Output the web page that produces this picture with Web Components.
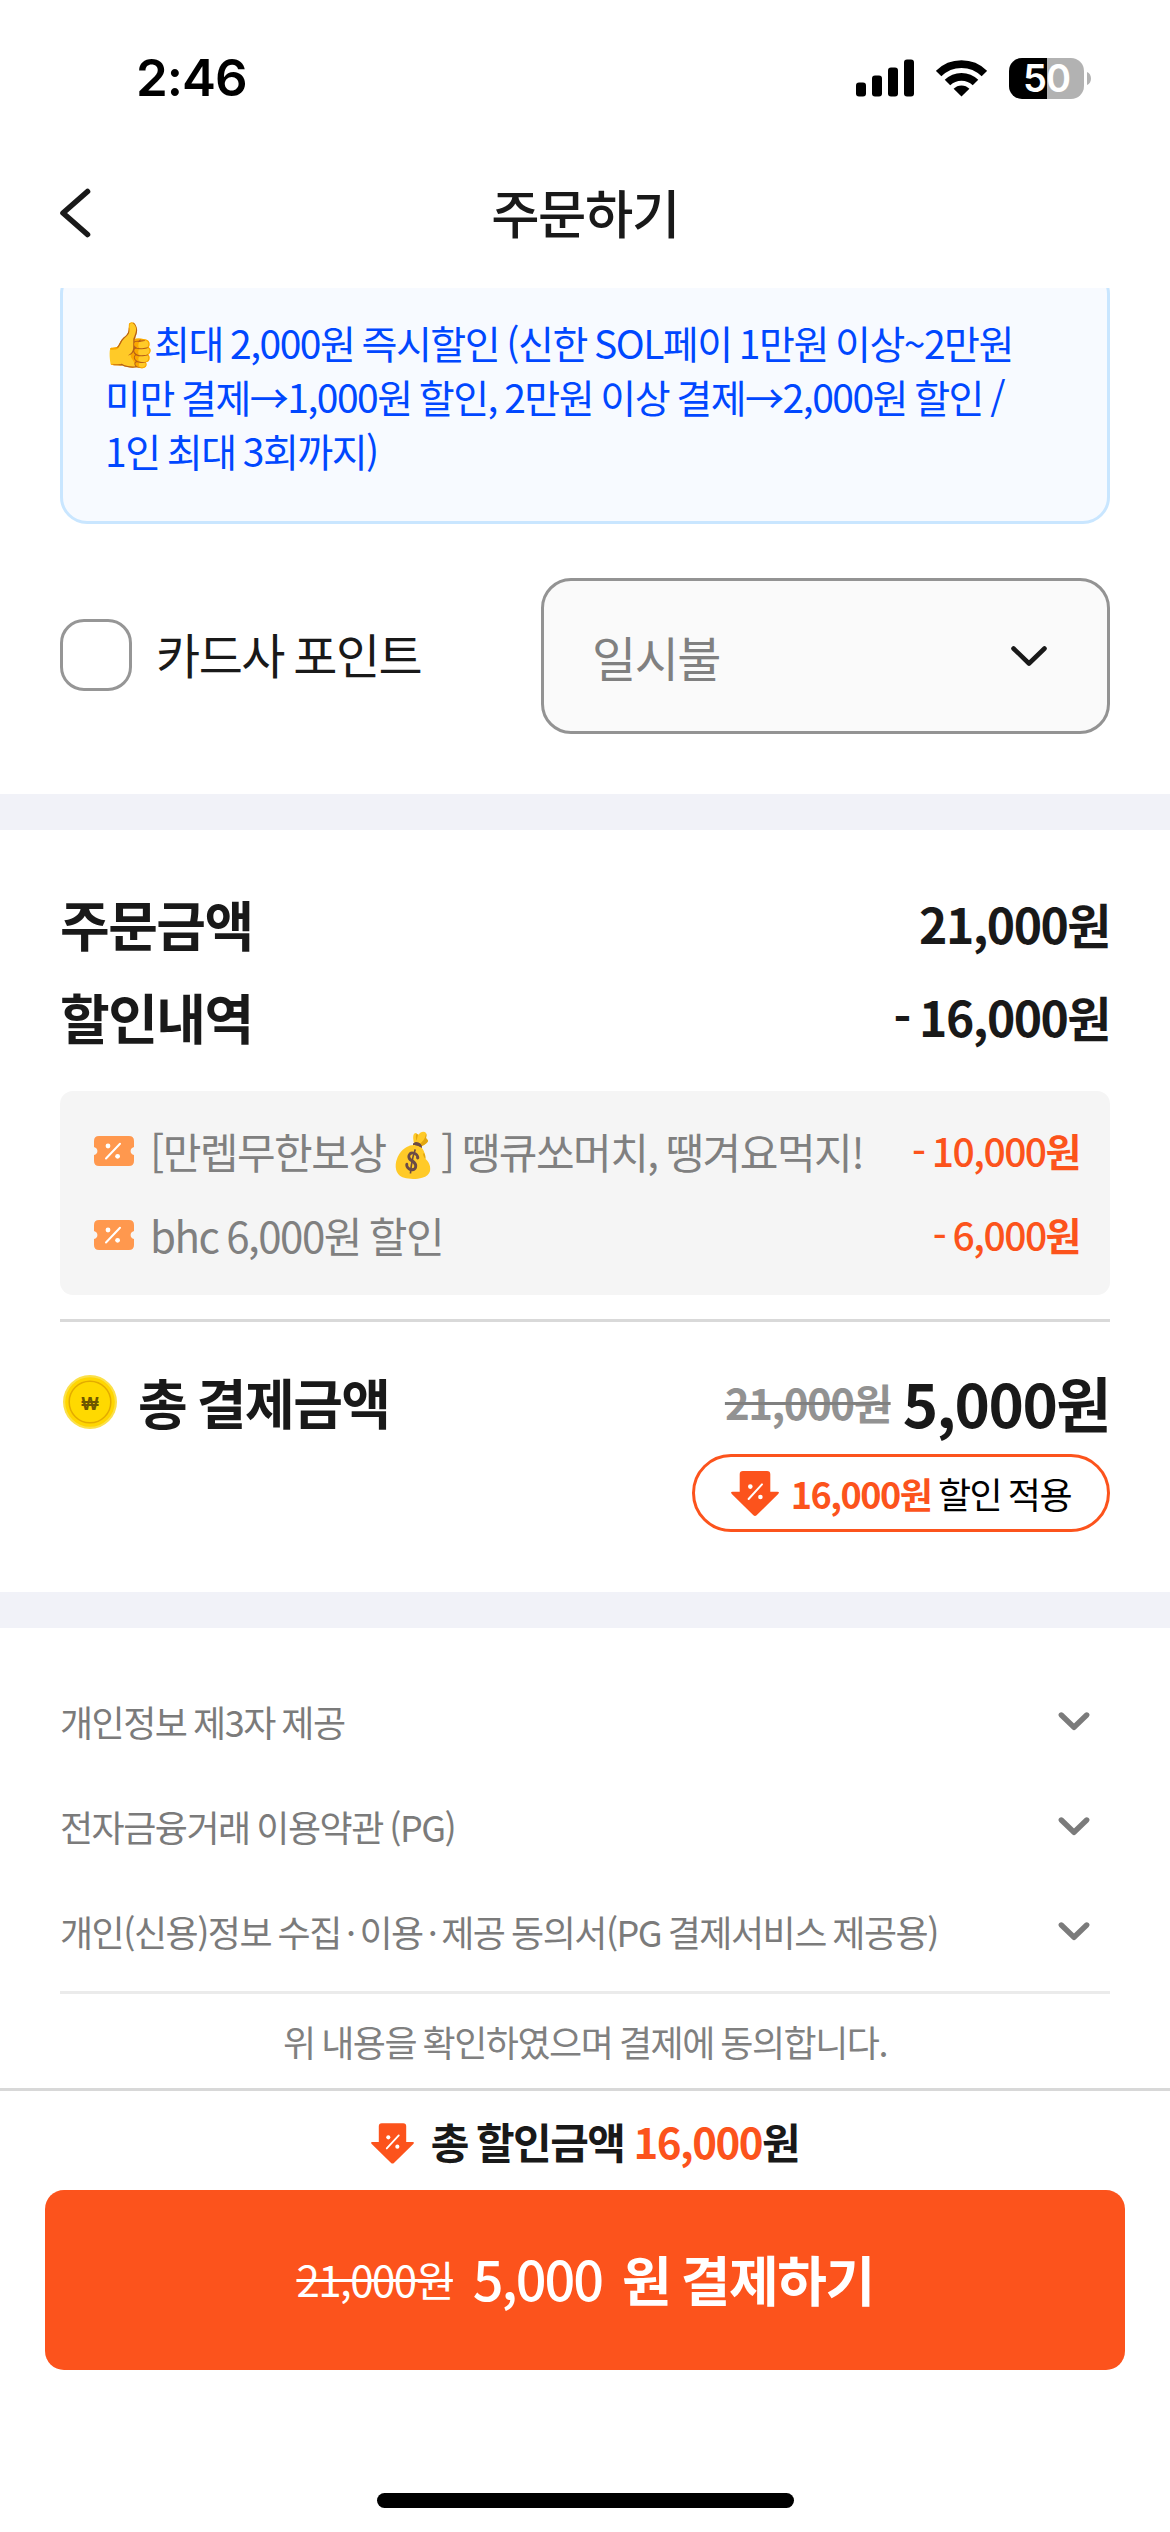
<!DOCTYPE html>
<html lang="ko">
<head>
<meta charset="utf-8">
<title>주문하기</title>
<style>
html,body{margin:0;padding:0;background:#fff}
body{font-family:"Noto Sans CJK KR","Noto Sans",sans-serif;color:#191919;letter-spacing:-1.5px;width:1170px;height:2532px;overflow:hidden}
</style>
</head>
<body>
<order-page></order-page>
<script>
const base = '<style>:host,*{word-spacing:-.056em}</style>';
const define = (name, html) => {
  const t = document.createElement('template');
  t.innerHTML = base + html;
  customElements.define(name, class extends HTMLElement {
    constructor() {
      super();
      this.attachShadow({ mode: 'open' }).append(t.content.cloneNode(true));
    }
  });
};

define('status-bar', `
<style>
:host{display:flex;height:156px;box-sizing:border-box;padding:0 79px 0 136px;justify-content:space-between;align-items:center;color:#000;font-family:Inter,"Liberation Sans",sans-serif}
.time{font-size:51px;font-weight:600;letter-spacing:-1px;line-height:60px}
.icons{display:flex;align-items:center}
svg{display:block}
.sig{margin-right:22px}.wifi{margin-right:22px}
.bat{display:flex;align-items:center;gap:3px}
.cell{width:75px;height:41px;border-radius:13px;background:linear-gradient(90deg,#000 38px,#b2b2b2 38px);color:#fff;font-size:38px;font-weight:600;line-height:41px;text-align:center;letter-spacing:-1px}
</style>
<span class="time">2:46</span>
<div class="icons">
<svg class="sig" width="58" height="38" viewBox="0 0 58 38"><g fill="#000"><rect y="23.5" width="10" height="14" rx="3"/><rect x="16" y="16.5" width="10" height="21" rx="3"/><rect x="32" y="8.5" width="10" height="29" rx="3"/><rect x="48" y=".5" width="10" height="37" rx="3"/></g></svg>
<svg class="wifi" width="51" height="38" viewBox="0 0 51 38"><g fill="none" stroke="#000" stroke-width="7.8"><path d="M2.6 14.6A32.4 32.4 0 0 1 48.4 14.6"/><path d="M11.5 23.6A19.8 19.8 0 0 1 39.5 23.6"/></g><path d="M17.6 29.8A11 11 0 0 1 33.4 29.8L25.5 37.5Z"/></svg>
<div class="bat"><div class="cell">50</div><svg width="4" height="13" viewBox="0 0 4 13"><path d="M0 0C5.3 2 5.3 11 0 13Z" fill="#b2b2b2"/></svg></div>
</div>`);

define('nav-bar', `
<style>
:host{display:grid;grid-template-columns:100px 1fr 100px;height:132px;align-items:center;padding:0 57px;box-sizing:border-box}
h1{margin:0;padding-bottom:22px;text-align:center;font-size:52.5px;font-weight:500;line-height:60px;letter-spacing:-1.4px}
svg{display:block;margin-bottom:18px}
</style>
<svg width="36" height="52" viewBox="0 0 36 52"><path d="M30.5 4.5 6 26 30.5 47.5" fill="none" stroke="#191919" stroke-width="5.6" stroke-linecap="round" stroke-linejoin="round"/></svg>
<h1><slot></slot></h1>`);

define('notice-card', `
<style>
:host{display:block;margin-top:-21px;box-sizing:border-box;height:257px;border:3px solid #c9e6ff;border-radius:27px;background:#f7faff;padding:45px 0 0 42px;color:#0047ff;font-size:39px;line-height:54px;white-space:nowrap}
</style><slot></slot>`);

define('emoji-glyph', `
<style>
:host{display:inline-flex;justify-content:center;width:var(--w,49px);height:30px;line-height:30px;font-size:var(--s,44px);letter-spacing:0;font-family:"Noto Color Emoji",sans-serif;vertical-align:-1px}
span{flex:none;transform:scaleX(var(--k,1))}
</style><span><slot></slot></span>`);

define('check-box', `
<style>
:host{display:flex;align-items:center;gap:24px;font-size:48px;line-height:72px}
i{display:block;width:72px;height:72px;box-sizing:border-box;border:3px solid #969696;border-radius:24px;background:#fff}
span{padding-bottom:4px}
</style><i></i><span><slot></slot></span>`);

define('select-box', `
<style>
:host{display:flex;align-items:center;justify-content:space-between;width:569px;height:156px;box-sizing:border-box;border:3px solid #939393;border-radius:30px;background:#fafafa;padding:0 57px 0 48px;font-size:48px;line-height:72px;color:#808080}
</style><slot></slot>
<svg width="42" height="26" viewBox="0 0 42 26"><path d="M5.5 5.5 21 20.5 36.5 5.5" fill="none" stroke="#191919" stroke-width="4.6" stroke-linecap="round" stroke-linejoin="round"/></svg>`);

define('section-gap', `<style>:host{display:block;height:36px;background:#f1f2f8}</style>`);

define('amount-row', `
<style>
:host{display:flex;justify-content:space-between;align-items:center;height:93px;font-weight:700;font-size:54px;line-height:80px}
.v{font-size:48px;padding-bottom:2px}
</style><span><slot></slot></span><span class="v"><slot name="value"></slot></span>`);

define('ticket-icon', `
<style>:host{display:block}svg{display:block}</style>
<svg width="40" height="30" viewBox="0 0 40 30"><path d="M5 0H35Q40 0 40 5V11Q36.6 12 36.6 15T40 19V25Q40 30 35 30H5Q0 30 0 25V19Q3.4 18 3.4 15T0 11V5Q0 0 5 0Z" fill="#ff984e"/><path d="M12 22.5 26 7.8" stroke="#fff" stroke-width="2"  stroke-linecap="round"/><circle cx="14" cy="10" r="2.4" fill="#fff"/><circle cx="23.6" cy="20.3" r="2.4" fill="#fff"/></svg>`);

define('coupon-row', `
<style>
:host{display:flex;align-items:center;height:84px;font-size:42px;line-height:60px;color:#808080;white-space:nowrap}
.t{flex:1;margin-left:16px}
.v{font-size:39px;font-weight:500;color:#fc531c;padding-bottom:3px}
</style><ticket-icon></ticket-icon><span class="t"><slot></slot></span><span class="v"><slot name="value"></slot></span>`);

define('coupon-list', `
<style>:host{display:block;box-sizing:border-box;height:204px;border-radius:13px;background:#f5f5f5;padding:18px 30px 18px 34px}</style><slot></slot>`);

define('coin-icon', `
<style>:host{display:block}svg{display:block}</style>
<svg width="60" height="60" viewBox="0 0 60 60"><circle cx="30" cy="30" r="27" fill="#fbe04a"/><circle cx="30" cy="30" r="24.8" fill="#ffd600"/><circle cx="30" cy="30" r="20.8" fill="#ffd900" stroke="#e3ab00" stroke-width="1.5"/><text x="30" y="38" text-anchor="middle" font-family="Liberation Sans,sans-serif" font-weight="700" font-size="18" letter-spacing="0" fill="#6e5600">₩</text></svg>`);

define('down-icon', `
<style>:host{display:block;width:48px;height:45px}svg{display:block;width:100%;height:100%}</style>
<svg viewBox="0 0 48 45"><path d="M12 0H36Q39.3 0 39.3 3.3V20.7H46.5Q49 21 47.2 23L25.6 44.2Q24 45.6 22.4 44.2L.8 23Q-1 21 1.5 20.7H8.7V3.3Q8.7 0 12 0Z" fill="#fc531c"/><path d="M17.6 28 31 13.4" stroke="#fff" stroke-width="2" stroke-linecap="round"/><circle cx="19.3" cy="15.6" r="2.3" fill="#fff"/><circle cx="29.4" cy="26" r="2.3" fill="#fff"/></svg>`);

define('total-row', `
<style>
:host{display:flex;align-items:center;height:108px;font-weight:700;font-size:54px;line-height:80px}
.l{margin-left:18px;flex:1}
.p{display:flex;align-items:center;gap:12px}
s{font-size:42px;color:#929292;text-decoration:line-through 3px #808080}
b{font-size:60px;font-weight:700}
</style><coin-icon></coin-icon><span class="l"><slot></slot></span><span class="p"><s><slot name="before"></slot></s><b><slot name="after"></slot></b></span>`);

define('discount-pill', `
<style>
:host{display:flex;align-items:center;align-self:flex-end;gap:12px;height:78px;box-sizing:border-box;border:3px solid #fc531c;border-radius:39px;padding:0 36px;font-size:36px;line-height:60px;color:#000}
::slotted(b){color:#fc531c}
</style><down-icon></down-icon><span><slot></slot></span>`);

define('terms-row', `
<style>
:host{display:flex;justify-content:space-between;align-items:center;height:105px;padding-right:16px;font-size:36px;line-height:54px;color:#7b7b7b;white-space:nowrap}
</style><span><slot></slot></span>
<svg width="40" height="28" viewBox="0 0 40 28"><path d="M7.3 8 20 20.3 32.7 8" fill="none" stroke="#7b7b7b" stroke-width="5.4" stroke-linecap="round" stroke-linejoin="round"/></svg>`);

define('pay-footer', `
<style>
:host{display:flex;flex-direction:column;border-top:3px solid #d8d8d8;height:441px;box-sizing:border-box;background:#fff}
.sum{display:flex;align-items:center;justify-content:center;height:99px;font-size:42px;font-weight:700;line-height:60px}
down-icon{width:43px;height:41px;margin:6px 17px 0 0}
em{font-style:normal;color:#fc531c;margin-left:9px}
.btn{display:flex;align-items:center;justify-content:center;gap:20px;height:180px;box-sizing:border-box;padding-bottom:2px;margin:0 45px;border-radius:19px;background:#fc531c;color:#fff;line-height:80px}
.btn s{font-size:42px;text-decoration:line-through 3px}
.btn span{font-size:54px;font-weight:500;letter-spacing:-2px;padding-bottom:2px}
.btn b{font-size:54px}
.home{width:417px;height:15px;border-radius:7.5px;background:#000;margin:123px auto 0}
</style>
<div class="sum"><down-icon></down-icon><span>총 할인금액</span><em>16,000</em><span>원</span></div>
<div class="btn"><s>21,000원</s><span>5,000</span><b>원 결제하기</b></div>
<div class="home"></div>`);

define('order-page', `
<style>
:host{display:flex;flex-direction:column;width:1170px;height:2532px;background:#fff}
.scroll{height:1800px;overflow:hidden;display:flex;flex-direction:column}
.pad{margin:0 60px;display:flex;flex-direction:column}
.card{height:236px}
.opts{display:flex;justify-content:space-between;align-items:center;height:156px;margin-top:54px;margin-bottom:60px}
check-box{margin-top:-2px}
.order{padding-top:47px}
coupon-list{margin-top:28px}
.line{height:3px;background:#d9d9d9;margin:24px 0 26px}
total-row{margin-bottom:-2px}
discount-pill{margin-bottom:60px}
.terms{padding-top:40px}
.dot{margin:0 5px}
.thin{height:3px;background:#ebebeb;margin-top:8px}
.agree{text-align:center;font-size:36px;line-height:54px;color:#808080;margin-top:20px}
.w{font-weight:700}
</style>
<status-bar></status-bar>
<nav-bar>주문하기</nav-bar>
<div class="scroll">
  <div class="pad card"><notice-card><emoji-glyph>👍</emoji-glyph>최대 2,000원 즉시할인 (신한 SOL페이 1만원 이상~2만원<br>미만 결제→1,000원 할인, 2만원 이상 결제→2,000원 할인 /<br>1인 최대 3회까지)</notice-card></div>
  <div class="pad"><div class="opts"><check-box>카드사 포인트</check-box><select-box>일시불</select-box></div></div>
  <section-gap></section-gap>
  <div class="pad order">
    <amount-row>주문금액<span slot="value">21,000원</span></amount-row>
    <amount-row>할인내역<span slot="value">- 16,000원</span></amount-row>
    <coupon-list>
      <coupon-row>[만렙무한보상<emoji-glyph style="--w:55.5px;--s:43px;--k:.82">💰</emoji-glyph>] 땡큐쏘머치, 땡겨요먹지!<span slot="value">- 10,000<span class="w">원</span></span></coupon-row>
      <coupon-row>bhc 6,000원 할인<span slot="value">- 6,000<span class="w">원</span></span></coupon-row>
    </coupon-list>
    <div class="line"></div>
    <total-row>총 결제금액<span slot="before">21,000원</span><span slot="after">5,000원</span></total-row>
    <discount-pill><b>16,000원</b> 할인 적용</discount-pill>
  </div>
  <section-gap></section-gap>
  <div class="pad terms">
    <terms-row>개인정보 제3자 제공</terms-row>
    <terms-row>전자금융거래 이용약관 (PG)</terms-row>
    <terms-row>개인(신용)정보 수집<span class="dot">·</span>이용<span class="dot">·</span>제공 동의서(PG 결제서비스 제공용)</terms-row>
    <div class="thin"></div>
    <div class="agree">위 내용을 확인하였으며 결제에 동의합니다.</div>
  </div>
</div>
<pay-footer></pay-footer>`);
</script>
</body>
</html>
